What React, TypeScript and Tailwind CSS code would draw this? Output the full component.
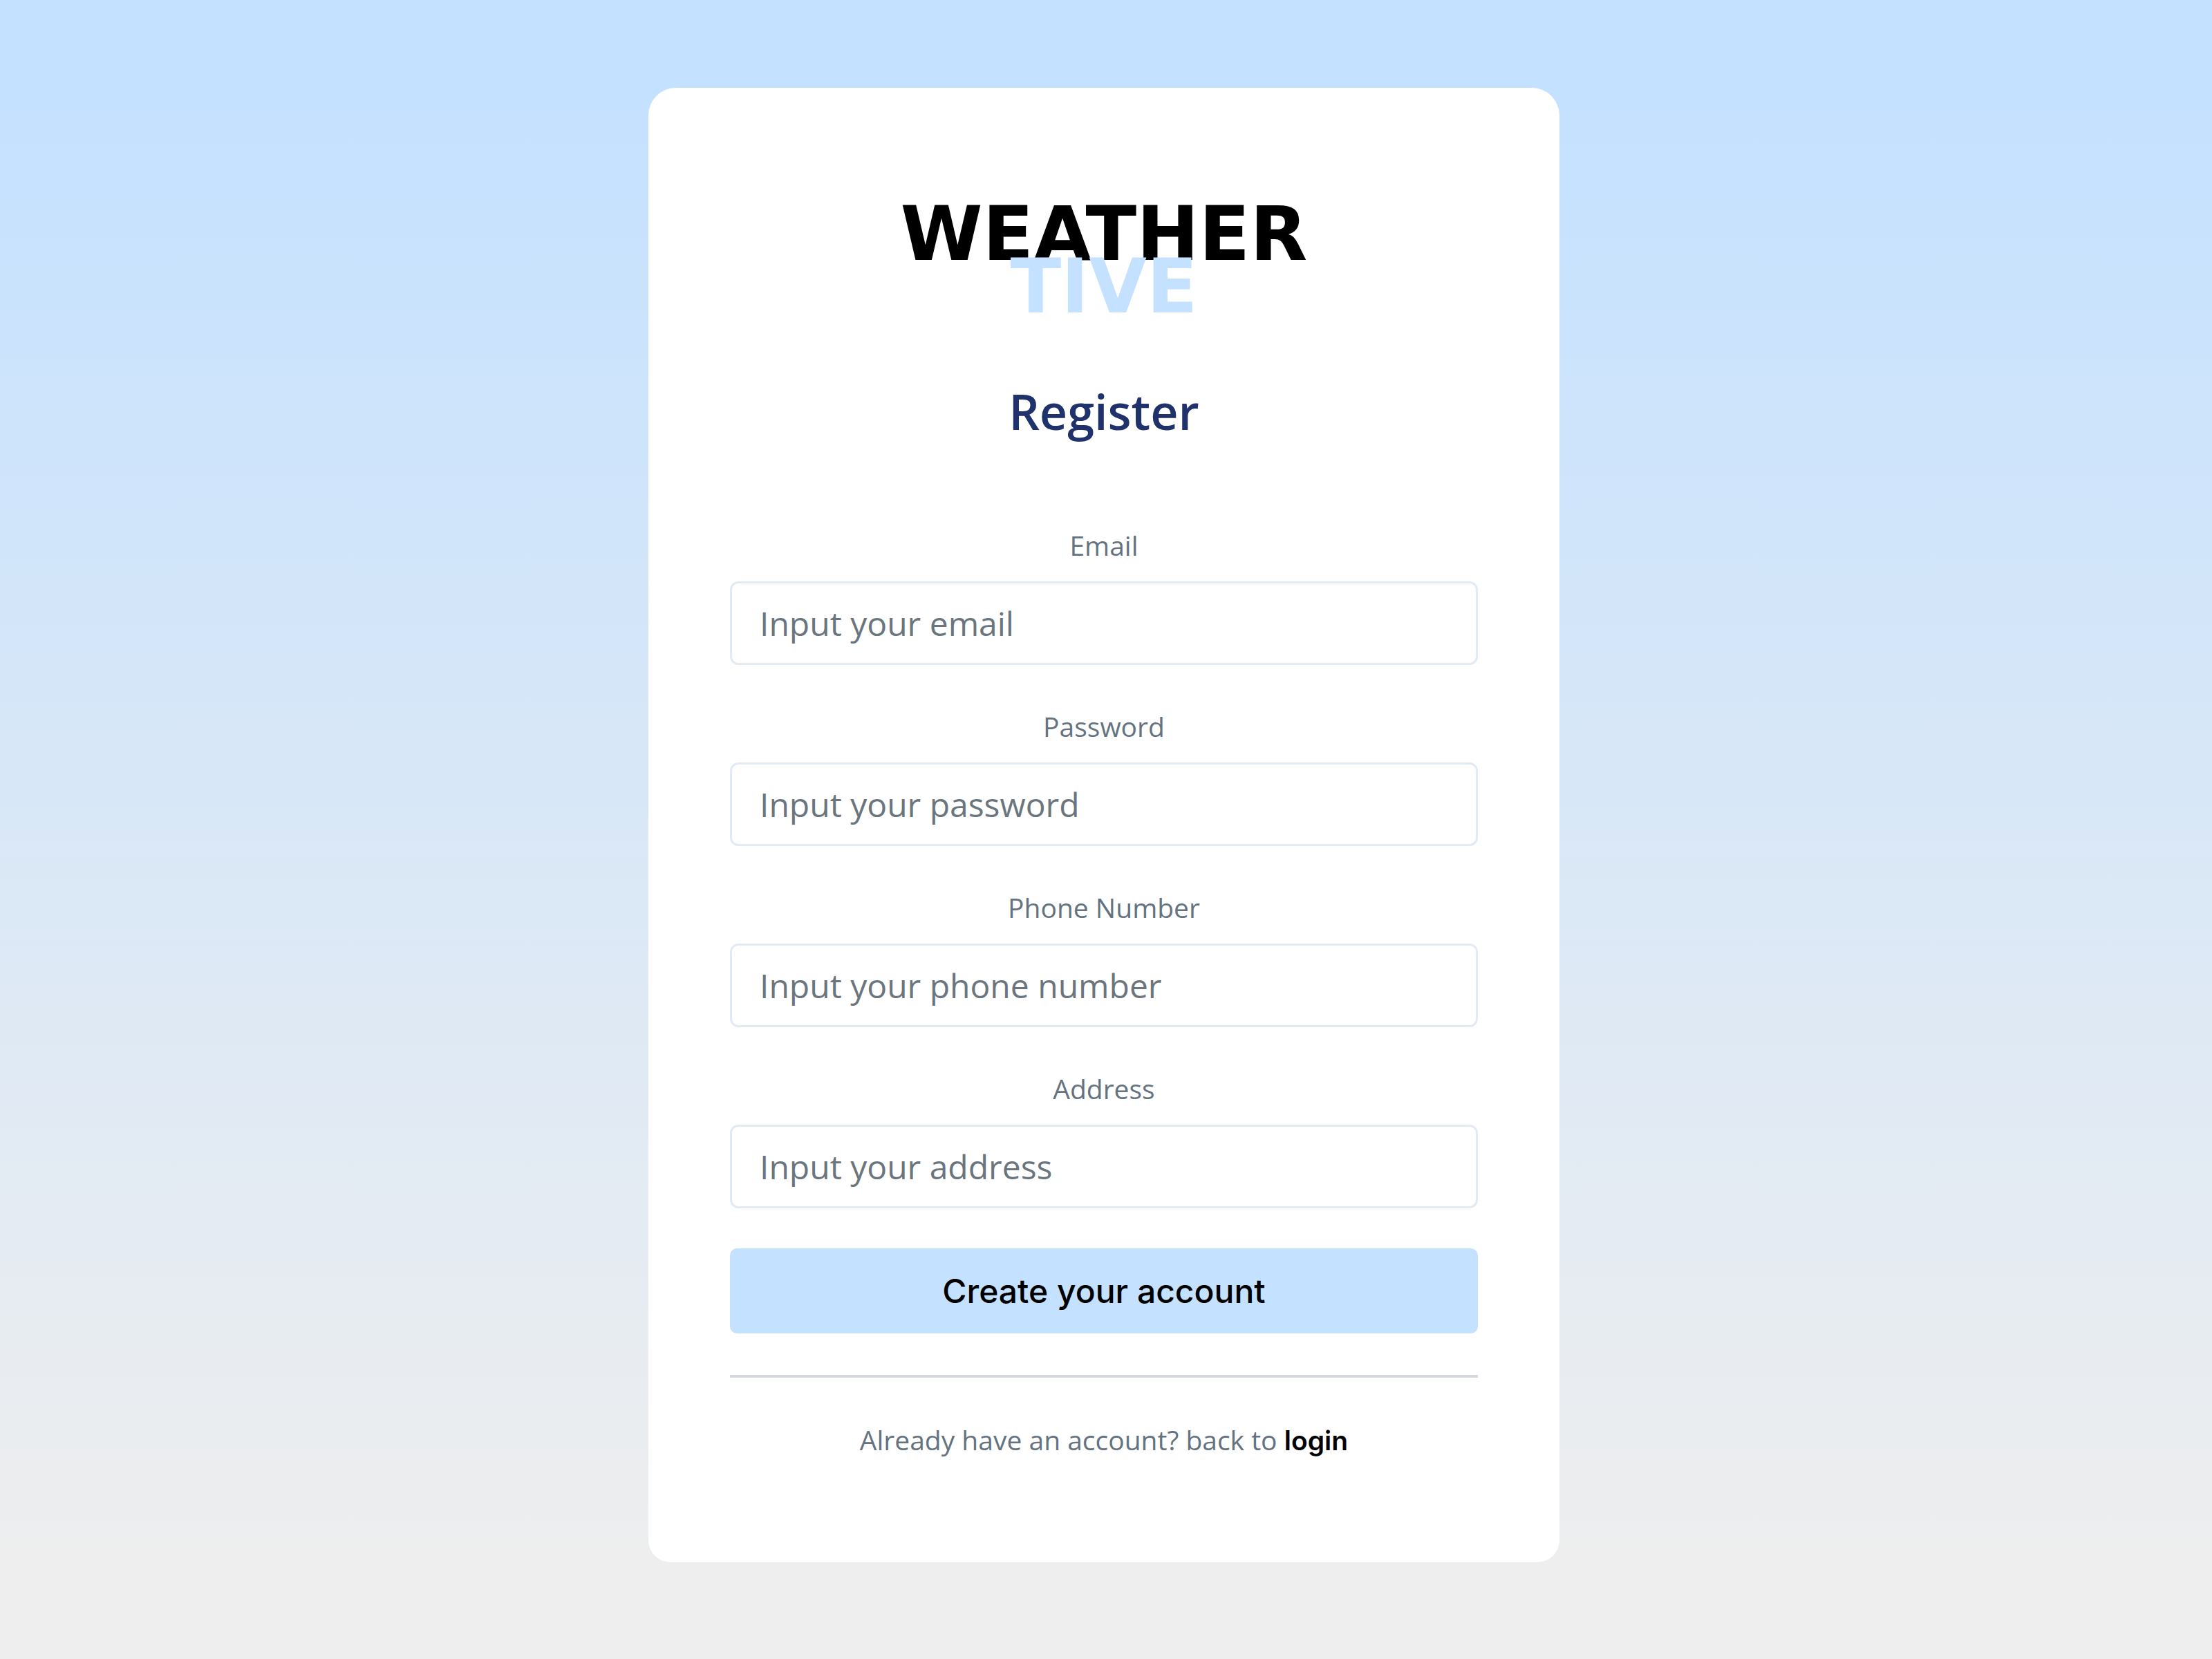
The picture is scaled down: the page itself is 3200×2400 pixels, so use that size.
const fields = [
  { id: "email", label: "Email", type: "email", placeholder: "Input your email" },
  { id: "password", label: "Password", type: "password", placeholder: "Input your password" },
  { id: "phone", label: "Phone Number", type: "tel", placeholder: "Input your phone number" },
  { id: "address", label: "Address", type: "text", placeholder: "Input your address" },
];

function Logo() {
  return (
    <div className="flex flex-col items-center font-['DejaVu_Sans',sans-serif] text-[108px] leading-[76px] font-bold">
      <span className="text-black">WEATHER</span>
      <span className="text-[#c4e1ff]">TIVE</span>
    </div>
  );
}

export default function App() {
  return (
    <div className="flex min-h-screen flex-col items-center bg-linear-to-b from-[#c4e1ff] from-5% to-[#eeeeee] to-95% pt-[127px] pr-[6px] pb-[140px] font-['Open_Sans',sans-serif]">
      <main className="w-full max-w-[1318px] rounded-t-[40px] rounded-b-[32px] bg-white px-[118px] pt-[174px] pb-[148px] text-center">
        <Logo />
        <h1 className="mt-[96px] text-[70px] leading-[92px] font-semibold text-[#1f326b]">Register</h1>
        <form className="mt-[128px]" onSubmit={(e) => e.preventDefault()}>
          {fields.map((f) => (
            <div key={f.id} className="mb-[69px] last-of-type:mb-[58px]">
              <label htmlFor={f.id} className="mb-[32px] block text-[39px] leading-[40px] text-[#64737f]">
                {f.label}
              </label>
              <input
                id={f.id}
                type={f.type}
                placeholder={f.placeholder}
                className="block h-[121px] w-full rounded-[12px] border-3 border-[#e2eaf4] bg-white px-[40px] text-[48px] text-slate-700 outline-none placeholder:text-[#6b757d]"
              />
            </div>
          ))}
          <button
            type="submit"
            className="block h-[123px] w-full rounded-[10px] bg-[#c4e1ff] font-['Inter',sans-serif] text-[48px] font-medium text-black"
          >
            Create your account
          </button>
        </form>
        <hr className="mt-[60px] border-t-4 border-[#d6d8df]" />
        <p className="mt-[62px] text-[39px] leading-[56px] text-[#64737f]">
          Already have an account? back to{" "}
          <a href="#login" className="font-['Inter',sans-serif] font-semibold text-black">
            login
          </a>
        </p>
      </main>
    </div>
  );
}
